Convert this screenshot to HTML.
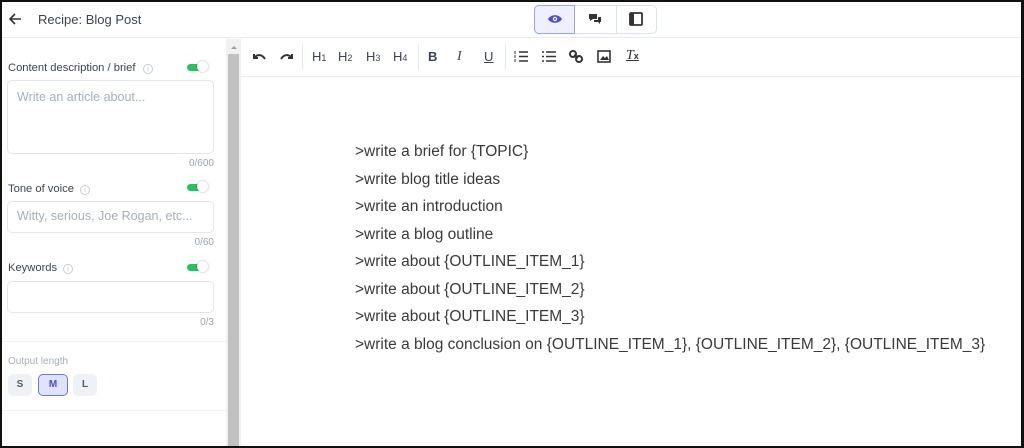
<!DOCTYPE html>
<html><head><meta charset="utf-8"><style>
*{box-sizing:border-box;margin:0;padding:0}
body{width:1024px;height:448px;overflow:hidden;background:#fff;font-family:"Liberation Sans",sans-serif;position:relative}
.frame{position:absolute;left:0;top:0;width:1024px;height:448px;border:2px solid #111;border-right-width:3px;border-bottom-width:2px;pointer-events:none;z-index:10}
.abs{position:absolute}
.hdr{left:0;top:0;width:1024px;height:38px;border-bottom:1px solid #e6ebf2}
.lbl{font-size:11.2px;color:#3c4352}
.inp{border:1px solid #e2e6ee;border-radius:5px;background:#fff}
.ph{font-size:12.5px;color:#a5aebf}
.cnt{font-size:10px;color:#9aa3b3;text-align:right}
.tog{width:24px;height:12px}
.tog:before{content:"";position:absolute;left:0;top:2px;width:14px;height:7px;background:#22c55e;border-radius:4px}
.tog:after{content:"";position:absolute;left:10px;top:-1px;width:11px;height:11px;border-radius:50%;background:#fff;box-shadow:0 0 2px rgba(0,0,0,.35)}
.info{width:10px;height:10px;border:1px solid #c6ccd8;border-radius:50%;font-size:7px;color:#b8bfcc;text-align:center;line-height:9px}
.tb{font-size:13px;color:#3c4352;top:49px}
.line{left:355px;font-size:15.5px;color:#3a3a3a;font-family:"Liberation Sans",sans-serif}
.sz{top:374px;width:24px;height:22px;border-radius:5px;background:#eef1f6;font-size:10px;font-weight:bold;color:#555d6c;text-align:center;line-height:22px}
</style></head><body>
<div class="abs hdr"></div>
<svg class="abs" style="left:8px;top:12px" width="14" height="14" viewBox="0 0 14 14"><path d="M13 7H2M7 2L2 7l5 5" fill="none" stroke="#333" stroke-width="1.6"/></svg>
<div class="abs" style="left:38px;top:12px;font-size:13px;color:#3c4352">Recipe: Blog Post</div>
<div class="abs" style="left:534px;top:5px;width:123px;height:29px;border:1px solid #dde2ea;border-radius:5px"></div>
<div class="abs" style="left:534px;top:5px;width:41px;height:29px;border:1px solid #9aa4f5;border-radius:5px 0 0 5px;background:#eef0ff"></div>
<div class="abs" style="left:616px;top:5px;width:1px;height:29px;background:#dde2ea"></div>
<svg class="abs" style="left:547px;top:13px" width="16" height="12" viewBox="0 0 16 12"><path d="M1 6C4 1 12 1 15 6C12 11 4 11 1 6Z" fill="#4f46e5"/><circle cx="8" cy="6" r="2.2" fill="#fff"/><circle cx="8" cy="6" r="1" fill="#4f46e5"/></svg>
<svg class="abs" style="left:588px;top:13px" width="14" height="12" viewBox="0 0 14 12"><path d="M1 1h8v5H5l-3 2V6H1z" fill="#333"/><path d="M10 4h3v5h-1v2l-2-2H6V7h4z" fill="#333"/></svg>
<svg class="abs" style="left:629px;top:12px" width="14" height="14" viewBox="0 0 14 14"><rect x="1" y="1" width="12" height="12" rx="1" fill="none" stroke="#333" stroke-width="1.8"/><rect x="1" y="1" width="4" height="12" fill="#333"/></svg>

<div class="abs" style="left:226px;top:39px;width:15px;height:409px;background:#f1f1f1"></div>
<div class="abs" style="left:228px;top:54px;width:11px;height:394px;background:#c1c1c1"></div>
<div class="abs" style="left:231px;top:43px;width:0;height:0;border:3px solid transparent;border-bottom:3px solid #a0a0a0"></div>

<div class="abs lbl" style="left:8px;top:62px">Content description / brief</div>
<div class="abs info" style="left:143px;top:64px">i</div>
<div class="abs tog" style="left:187px;top:62px"></div>
<div class="abs inp" style="left:7px;top:80px;width:207px;height:74px"></div>
<div class="abs ph" style="left:17px;top:90px">Write an article about...</div>
<div class="abs cnt" style="left:150px;top:158px;width:64px">0/600</div>

<div class="abs lbl" style="left:8px;top:183px">Tone of voice</div>
<div class="abs info" style="left:80px;top:185px">i</div>
<div class="abs tog" style="left:187px;top:182px"></div>
<div class="abs inp" style="left:7px;top:201px;width:207px;height:32px"></div>
<div class="abs ph" style="left:17px;top:209px">Witty, serious, Joe Rogan, etc...</div>
<div class="abs cnt" style="left:150px;top:237px;width:64px">0/60</div>

<div class="abs lbl" style="left:8px;top:262px">Keywords</div>
<div class="abs info" style="left:63px;top:264px">i</div>
<div class="abs tog" style="left:187px;top:262px"></div>
<div class="abs inp" style="left:7px;top:281px;width:207px;height:32px"></div>
<div class="abs cnt" style="left:150px;top:317px;width:64px">0/3</div>
<div class="abs" style="left:2px;top:341px;width:224px;height:1px;background:#eef1f5"></div>
<div class="abs" style="left:8px;top:356px;font-size:10px;color:#a5aebf">Output length</div>
<div class="abs sz" style="left:8px">S</div>
<div class="abs sz" style="left:38px;width:30px;background:#dfe3ff;border:1px solid #6b74f0;color:#4f46e5;line-height:20px">M</div>
<div class="abs sz" style="left:73px">L</div>
<div class="abs" style="left:2px;top:410px;width:224px;height:1px;background:#eef1f5"></div>

<div class="abs" style="left:241px;top:76px;width:782px;height:1px;background:#e6ebf2"></div>
<div class="abs" style="left:302px;top:44px;width:1px;height:26px;background:#e6ebf2"></div>
<div class="abs" style="left:418px;top:44px;width:1px;height:26px;background:#e6ebf2"></div>
<div class="abs" style="left:505px;top:44px;width:1px;height:26px;background:#e6ebf2"></div>
<svg class="abs" style="left:252px;top:52px" width="14" height="10" viewBox="0 0 14 10"><path d="M2 2v4h4M2 6C5 2 10 2 13 7" fill="none" stroke="#333" stroke-width="2"/></svg>
<svg class="abs" style="left:280px;top:52px" width="14" height="10" viewBox="0 0 14 10"><path d="M12 2v4H8M12 6C9 2 4 2 1 7" fill="none" stroke="#333" stroke-width="2"/></svg>
<div class="abs tb" style="left:312px">H<span style="font-size:9px">1</span></div>
<div class="abs tb" style="left:338px">H<span style="font-size:9px">2</span></div>
<div class="abs tb" style="left:366px">H<span style="font-size:9px">3</span></div>
<div class="abs tb" style="left:393px">H<span style="font-size:9px">4</span></div>
<div class="abs tb" style="left:428px;font-weight:bold">B</div>
<div class="abs tb" style="left:457px;font-style:italic;font-family:'Liberation Serif',serif;font-size:14px">I</div>
<div class="abs tb" style="left:484px;text-decoration:underline">U</div>
<svg class="abs" style="left:514px;top:50px" width="14" height="13" viewBox="0 0 14 13"><path d="M5 2h9M5 6.5h9M5 11h9" stroke="#333" stroke-width="1.6"/><path d="M1 1v3M1 5v3M1 9v3" stroke="#333" stroke-width="1"/></svg>
<svg class="abs" style="left:542px;top:50px" width="14" height="13" viewBox="0 0 14 13"><path d="M4 2h10M4 6.5h10M4 11h10" stroke="#333" stroke-width="1.6"/><path d="M0 2h2M0 6.5h2M0 11h2" stroke="#333" stroke-width="1.6"/></svg>
<svg class="abs" style="left:569px;top:50px" width="14" height="13" viewBox="0 0 14 13"><circle cx="4" cy="4" r="3" fill="none" stroke="#333" stroke-width="2"/><circle cx="10" cy="9" r="3" fill="none" stroke="#333" stroke-width="2"/><path d="M5 5l4 3" stroke="#333" stroke-width="2"/></svg>
<svg class="abs" style="left:597px;top:50px" width="14" height="13" viewBox="0 0 14 13"><rect x="1" y="1" width="12" height="11" fill="none" stroke="#333" stroke-width="1.6"/><path d="M3 10l3-4 2 2 2-2 2 4z" fill="#333"/></svg>
<div class="abs" style="left:626px;top:48px;font-size:14px;font-style:italic;color:#333;text-decoration:underline;font-family:'Liberation Serif',serif">T<span style="font-size:9px;font-style:normal;font-weight:bold;font-family:'Liberation Sans'">x</span></div>

<div class="abs line" style="top:143px">&gt;write a brief for {TOPIC}</div>
<div class="abs line" style="top:171px">&gt;write blog title ideas</div>
<div class="abs line" style="top:198px">&gt;write an introduction</div>
<div class="abs line" style="top:226px">&gt;write a blog outline</div>
<div class="abs line" style="top:253px">&gt;write about {OUTLINE_ITEM_1}</div>
<div class="abs line" style="top:281px">&gt;write about {OUTLINE_ITEM_2}</div>
<div class="abs line" style="top:308px">&gt;write about {OUTLINE_ITEM_3}</div>
<div class="abs line" style="top:336px">&gt;write a blog conclusion on {OUTLINE_ITEM_1}, {OUTLINE_ITEM_2}, {OUTLINE_ITEM_3}</div>
<div class="frame"></div>
</body></html>
